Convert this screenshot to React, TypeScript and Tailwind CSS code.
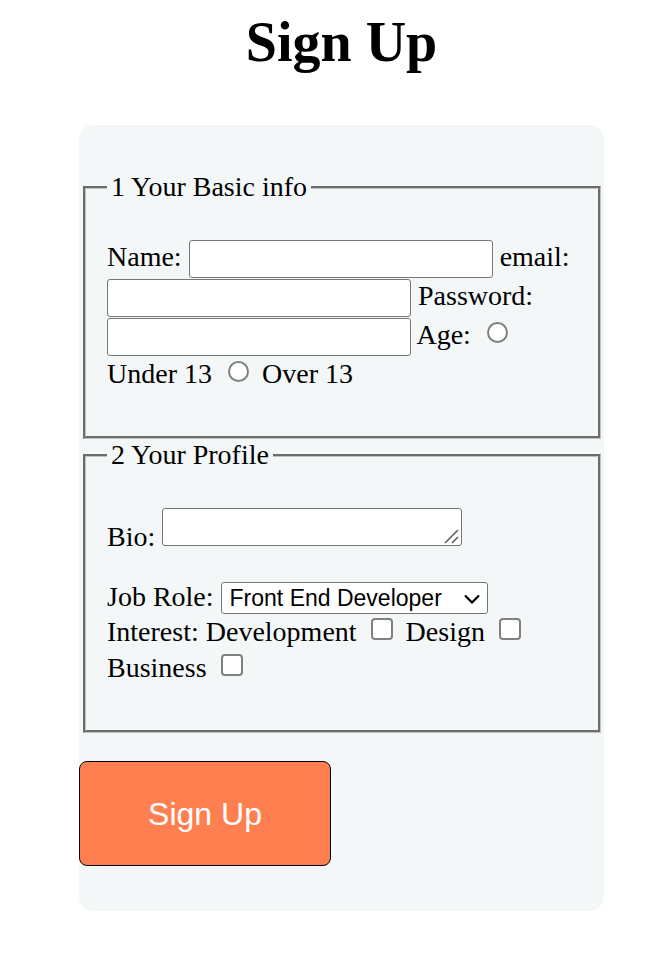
import React from "react";

const fieldsetClass =
  "ml-1 mr-[3px] border-[3px] [border-style:groove] border-[#c0c0c0] px-[21px]";
const inputClass =
  "inline-block h-[38px] w-[304px] max-w-full rounded-[3px] border border-[#767676] bg-white px-1 align-[-2px]";
const radioClass =
  "mr-[6px] ml-[9px] inline-block size-[21px] appearance-none rounded-full border-2 border-[#808080] bg-white align-[1px] checked:bg-[#0075ff]";
const checkClass =
  "mr-[6px] ml-[7px] inline-block size-[22px] appearance-none rounded-[4px] border-2 border-[#808080] bg-white align-[1px] checked:bg-[#0075ff]";

export default function App() {
  return (
    <main
      className="pt-[10px] pb-[45px] pl-[22px] text-[28px] leading-[32px] text-black"
      style={{ fontFamily: '"Liberation Serif", "Times New Roman", serif' }}
    >
      <h1 className="text-center text-[56px] leading-[64px] font-bold">Sign Up</h1>
      <form
        className="mx-auto mt-[51px] w-full max-w-[525px] rounded-[14px] bg-[#f4f7f8] pt-[46px] pb-[45px]"
        onSubmit={(e) => e.preventDefault()}
      >
        <fieldset className={`${fieldsetClass} pt-[36px] pb-[44px]`}>
          <legend className="px-1">1 Your Basic info</legend>
          <div className="leading-[36px]">
            <label htmlFor="name">Name:</label>{" "}
            <input id="name" type="text" className={inputClass} />{" "}
            <label htmlFor="email">email:</label>{" "}
            <input id="email" type="email" className={inputClass} />{" "}
            <label htmlFor="password">Password:</label>{" "}
            <input id="password" type="password" className={inputClass} />{" "}
            <span>Age:</span>{" "}
            <input id="under" type="radio" name="age" className={radioClass} />{" "}
            <label htmlFor="under">Under 13</label>{" "}
            <input id="over" type="radio" name="age" className={radioClass} />{" "}
            <label htmlFor="over">Over 13</label>
          </div>
        </fieldset>

        <fieldset className={`${fieldsetClass} pt-[37px] pb-[44px]`}>
          <legend className="px-1">2 Your Profile</legend>
          <div>
            <label htmlFor="bio">Bio:</label>{" "}
            <span className="relative inline-block align-baseline">
              <textarea
                id="bio"
                rows={1}
                className="block h-[38px] w-[300px] max-w-full resize-none overflow-hidden rounded-[3px] border border-[#767676] bg-white"
              />
              <svg
                className="pointer-events-none absolute right-[3px] bottom-[2px]"
                width="15"
                height="15"
                viewBox="0 0 15 15"
                fill="none"
                stroke="#5f5f5f"
                strokeWidth="1.6"
              >
                <path d="M1 14 14 1M8 14l6-6" />
              </svg>
            </span>
          </div>
          <div className="mt-[28px]">
            <label htmlFor="job">Job Role:</label>{" "}
            <span className="relative inline-block align-baseline">
              <select
                id="job"
                className="block h-[32px] w-[267px] appearance-none rounded-[3px] border border-[#767676] bg-white pl-2 text-[23px] leading-[28px]"
                style={{ fontFamily: '"Liberation Sans", Arial, sans-serif' }}
              >
                <option>Front End Developer</option>
              </select>
              <svg
                className="pointer-events-none absolute top-[12px] right-[7px]"
                width="18"
                height="11"
                viewBox="0 0 18 11"
                fill="none"
                stroke="#000"
                strokeWidth="2.2"
              >
                <path d="M2 1.500 9 8.500l7-7" />
              </svg>
            </span>
          </div>
          <div className="leading-[36px]">
            <span>Interest:</span> <label htmlFor="dev">Development</label>{" "}
            <input id="dev" type="checkbox" className={checkClass} />{" "}
            <label htmlFor="design">Design</label>{" "}
            <input id="design" type="checkbox" className={checkClass} />{" "}
            <label htmlFor="business">Business</label>{" "}
            <input id="business" type="checkbox" className={checkClass} />
          </div>
        </fieldset>

        <button
          type="submit"
          className="mt-[28px] block h-[105px] w-[252px] rounded-[8px] border border-black bg-[#ff7f50] text-[32px] text-white"
          style={{ fontFamily: '"Liberation Sans", Arial, sans-serif' }}
        >
          Sign Up
        </button>
      </form>
    </main>
  );
}
